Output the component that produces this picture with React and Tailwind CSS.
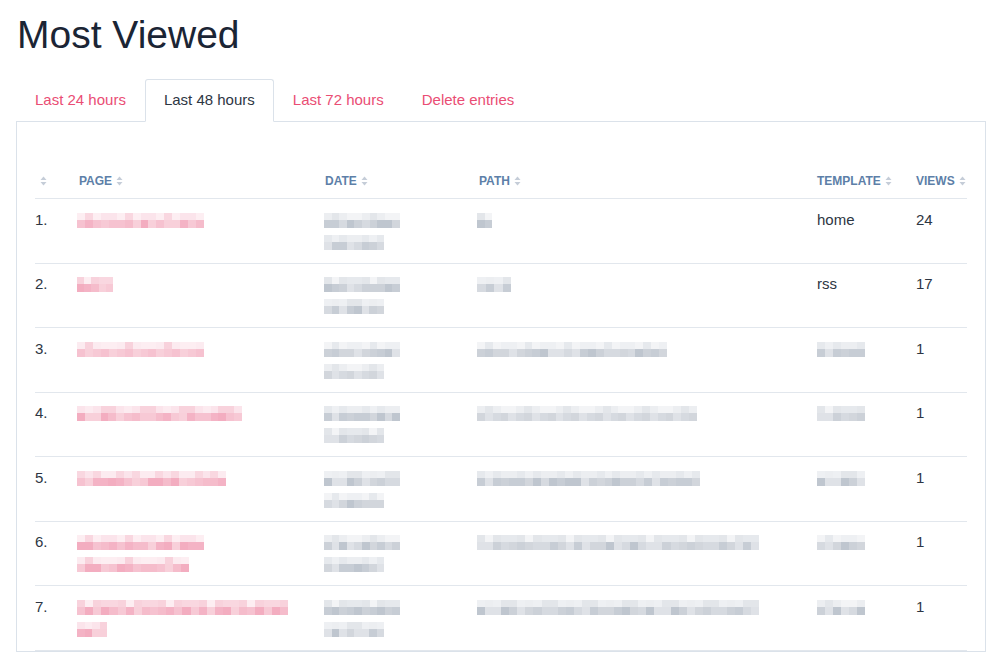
import React from "react";

const PINK_TOP = ["bg-[#fbe4eb]", "bg-[#f9d7e0]", "bg-[#fdeef2]", "bg-[#f8d2dc]", "bg-[#fcebf0]"];
const PINK_BOT = ["bg-[#f5bccb]", "bg-[#f7c9d5]", "bg-[#f3adc0]", "bg-[#f8d0da]", "bg-[#f4b3c5]", "bg-[#f6c2d0]"];
const GRAY_TOP = ["bg-[#eef0f3]", "bg-[#e6e9ed]", "bg-[#f3f4f6]", "bg-[#e3e6ea]", "bg-[#eceef1]"];
const GRAY_BOT = ["bg-[#ccd1d8]", "bg-[#d6dae0]", "bg-[#bfc6cf]", "bg-[#dfe2e7]", "bg-[#c7cdd5]", "bg-[#d2d6dc]"];

function Mosaic({ width, tone, seed = 1 }) {
  const n = Math.max(1, Math.round(width / 8));
  const top = tone === "pink" ? PINK_TOP : GRAY_TOP;
  const bot = tone === "pink" ? PINK_BOT : GRAY_BOT;
  const cells = Array.from({ length: n });
  return (
    <div className="flex flex-col h-[15px]" style={{ width }}>
      <div className="flex h-[7px]">
        {cells.map((_, i) => (
          <div key={i} className={`flex-1 ${top[(seed * 7 + i * 3 + ((i * i) % 5)) % top.length]}`} />
        ))}
      </div>
      <div className="flex h-[8px]">
        {cells.map((_, i) => (
          <div key={i} className={`flex-1 ${bot[(seed * 5 + i * 4 + ((i * i * seed) % 7)) % bot.length]}`} />
        ))}
      </div>
    </div>
  );
}

function Line({ children }) {
  return <div className="h-[22px] flex items-center">{children}</div>;
}

function SortIcon() {
  return (
    <svg width="7" height="10" viewBox="0 0 7 10" className="inline-block">
      <path d="M3.5 0.5 L6.5 4 L0.5 4 Z" fill="#c5cdd8" />
      <path d="M3.5 9.5 L6.5 6 L0.5 6 Z" fill="#c5cdd8" />
    </svg>
  );
}

const rows = [
  { n: "1.", page: [127], date: [76, 60], path: 15, template: "home", views: "24" },
  { n: "2.", page: [36], date: [76, 60], path: 34, template: "rss", views: "17" },
  { n: "3.", page: [127], date: [76, 60], path: 190, template: 48, views: "1" },
  { n: "4.", page: [165], date: [76, 60], path: 220, template: 48, views: "1" },
  { n: "5.", page: [149], date: [76, 60], path: 223, template: 48, views: "1" },
  { n: "6.", page: [127, 112], date: [76, 60], path: 282, template: 48, views: "1" },
  { n: "7.", page: [211, 30], date: [76, 60], path: 282, template: 48, views: "1" },
];

const tabs = [
  { label: "Last 24 hours", active: false },
  { label: "Last 48 hours", active: true },
  { label: "Last 72 hours", active: false },
  { label: "Delete entries", active: false },
];

const cols = "grid grid-cols-[42px_247px_153px_338px_99px_53px]";

export default function App() {
  return (
    <div className="w-[1000px] h-[653px] overflow-hidden bg-white font-['Liberation_Sans',Arial,sans-serif]">
      <h1 className="pl-[17px] pt-[12px] text-[39px] leading-[46px] text-[#1b2535]">Most Viewed</h1>
      <div className="mt-[21px] pl-[16px] flex relative z-10">
        {tabs.map((t) =>
          t.active ? (
            <div
              key={t.label}
              className="h-[43px] px-[18px] flex items-center text-[15px] text-[#2d3643] bg-white border border-[#dbe2ea] border-b-white rounded-t-[3px]"
            >
              {t.label}
            </div>
          ) : (
            <div key={t.label} className="h-[43px] px-[18px] flex items-center text-[15px] text-[#ea4d74] border border-transparent">
              {t.label}
            </div>
          )
        )}
      </div>
      <div className="ml-[16px] w-[970px] -mt-px border border-[#dbe2ea] pt-[41px] px-[18px]">
        <div className={`${cols} h-[36px] items-center border-b border-[#e2e7ed] text-[12px] font-bold text-[#5d7fa8]`}>
          <div className="pl-[5px] flex items-center"><SortIcon /></div>
          <div className="pl-[2px] flex items-center gap-[4px]">PAGE <SortIcon /></div>
          <div className="pl-[1px] flex items-center gap-[4px]">DATE <SortIcon /></div>
          <div className="pl-[2px] flex items-center gap-[4px]">PATH <SortIcon /></div>
          <div className="pl-[2px] flex items-center gap-[4px]">TEMPLATE <SortIcon /></div>
          <div className="pl-[2px] flex items-center gap-[4px]">VIEWS <SortIcon /></div>
        </div>
        {rows.map((r, idx) => (
          <div key={r.n} className={`${cols} h-[64.5px] pt-[10px] border-b border-[#e2e7ed] text-[15px] text-[#2d3643]`}>
            <Line>{r.n}</Line>
            <div>
              {r.page.map((w, i) => (
                <Line key={i}><Mosaic width={w} tone="pink" seed={idx * 3 + i + 1} /></Line>
              ))}
            </div>
            <div>
              {r.date.map((w, i) => (
                <Line key={i}><Mosaic width={w} tone="gray" seed={idx * 2 + i + 2} /></Line>
              ))}
            </div>
            <div>
              <Line><Mosaic width={r.path} tone="gray" seed={idx + 4} /></Line>
            </div>
            <div className="pl-[2px]">
              {typeof r.template === "string" ? (
                <Line>{r.template}</Line>
              ) : (
                <Line><Mosaic width={r.template} tone="gray" seed={idx + 6} /></Line>
              )}
            </div>
            <div className="pl-[2px]">
              <Line>{r.views}</Line>
            </div>
          </div>
        ))}
      </div>
    </div>
  );
}
